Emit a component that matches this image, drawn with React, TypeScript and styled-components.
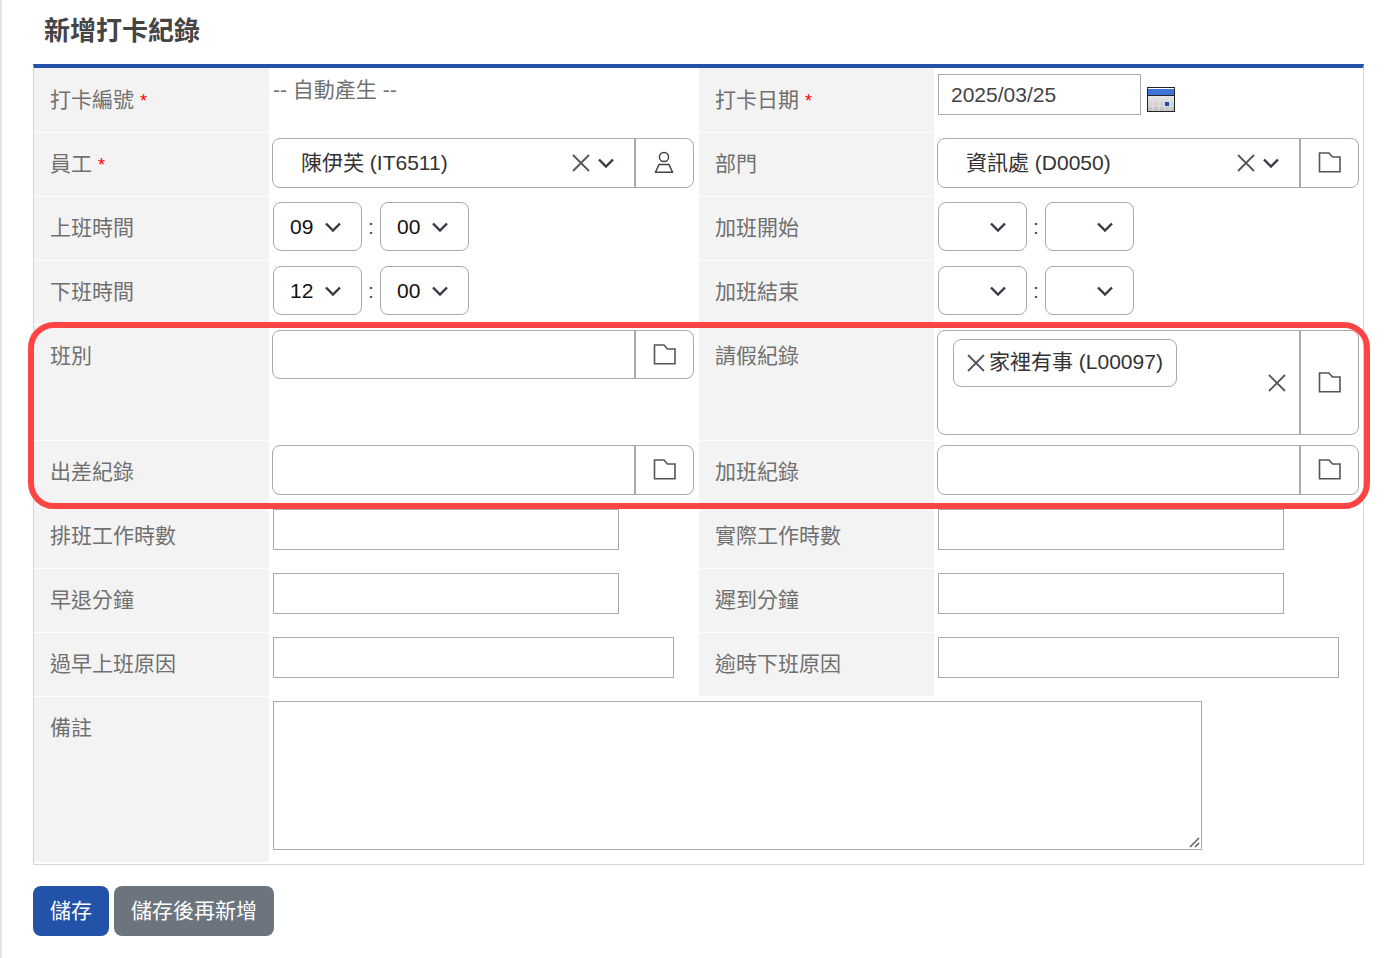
import React from 'react';
import styled, { createGlobalStyle } from 'styled-components';

const Global = createGlobalStyle`
  html, body { margin: 0; padding: 0; background: #fff; }
  body { font-family: "Liberation Sans", "Noto Sans CJK TC", sans-serif; font-size: 21px; }
  * { box-sizing: border-box; }
`;

const Page = styled.div`
  position: relative;
  width: 1400px;
  height: 958px;
  overflow: hidden;
  border-left: 2px solid #e4e4e4;
  padding-left: 31px;
`;
const Title = styled.h1`
  margin: 0;
  height: 64px;
  padding: 15px 0 0 11px;
  font-size: 26px;
  line-height: 32px;
  font-weight: 700;
  color: #444;
`;
const Table = styled.div`
  width: 1331px;
  border-top: 4px solid #2353a8;
  border-left: 1px solid #d4d4d4;
  border-right: 1px solid #d4d4d4;
  border-bottom: 1px solid #d4d4d4;
  padding-bottom: 1px;
`;
const Row = styled.div<{ $h: number }>`
  display: grid;
  grid-template-columns: 235px 430px 235px 429px;
  height: ${p => p.$h}px;
`;
const Label = styled.div<{ $top?: number }>`
  background: #f3f3f3;
  border-bottom: 1px solid #fff;
  padding: ${p => p.$top ?? 18}px 0 0 16px;
  line-height: 26px;
  color: #707070;
`;
const Star = styled.span`
  color: #f00;
  margin-left: 6px;
  font-size: 18px;
`;
const Value = styled.div<{ $span?: number; $top?: number }>`
  grid-column: span ${p => p.$span ?? 1};
  padding: ${p => p.$top ?? 5}px 0 0 4px;
  display: flex;
  align-items: flex-start;
`;
const Static = styled.div`
  margin-top: 3px;
  line-height: 26px;
  color: #707070;
`;
const TextInput = styled.input<{ $w: number }>`
  display: block;
  width: ${p => p.$w}px;
  height: 41px;
  border: 1px solid #aaa;
  padding: 0 12px;
  font: inherit;
  color: #444;
  background: #fff;
  outline: none;
`;
const CalendarIcon = styled.svg`
  margin: 13px 0 0 6px;
`;
const Combo = styled.div<{ $h?: number }>`
  margin-left: -1px;
  width: 422px;
  height: ${p => p.$h ?? 50}px;
  display: flex;
  border: 1px solid #aaa;
  border-radius: 8px;
  background: #fff;
`;
const ComboMain = styled.div`
  flex: 1;
  position: relative;
  display: flex;
  align-items: flex-start;
  min-width: 0;
`;
const ComboText = styled.div`
  padding: 11px 0 0 28px;
  line-height: 26px;
  color: #333;
  flex: 1;
`;
const ComboTools = styled.div`
  display: flex;
  align-items: center;
  height: 48px;
  padding-right: 20px;
  gap: 8px;
`;
const ComboClear = styled.div`
  display: flex;
  align-items: center;
  height: 100%;
  padding-right: 13px;
`;
const ComboButton = styled.div`
  width: 59px;
  flex: none;
  border-left: 2px solid #aaa;
  display: flex;
  align-items: center;
  justify-content: center;
  padding: 0 1px 1px 0;
`;
const Tag = styled.div`
  display: flex;
  align-items: center;
  gap: 4px;
  height: 48px;
  margin: 8px 0 0 15px;
  padding: 0 13px 6px 13px;
  border: 1px solid #aaa;
  border-radius: 8px;
  color: #333;
  white-space: nowrap;
`;
const TagCross = styled.span`
  display: flex;
  padding-top: 6px;
`;
const Spacer = styled.div`
  flex: 1;
`;
const TimeWrap = styled.div`
  display: flex;
  align-items: flex-start;
`;
const Time = styled.div`
  width: 89px;
  height: 49px;
  border: 1px solid #aaa;
  border-radius: 8px;
  padding: 0 20px 0 16px;
  display: flex;
  align-items: center;
  justify-content: space-between;
  color: #111;
  background: #fff;
`;
const TimeValue = styled.span`
  line-height: 24px;
`;
const Colon = styled.span`
  width: 18px;
  height: 49px;
  display: flex;
  align-items: center;
  justify-content: center;
  color: #444;
`;
const NoteWrap = styled.div`
  position: relative;
  width: 929px;
  height: 149px;
`;
const Note = styled.textarea`
  display: block;
  width: 100%;
  height: 100%;
  border: 1px solid #aaa;
  outline: none;
  resize: none;
  font: inherit;
  background: #fff;
`;
const Grip = styled.svg`
  position: absolute;
  right: 2px;
  bottom: 2px;
`;
const Actions = styled.div`
  display: flex;
  gap: 5px;
  margin-top: 21px;
`;
const Btn = styled.button<{ $bg: string; $w: number }>`
  width: ${p => p.$w}px;
  height: 50px;
  border: 0;
  border-radius: 8px;
  padding: 0 0 4px;
  background: ${p => p.$bg};
  color: #fff;
  font: inherit;
`;
const Highlight = styled.div`
  position: absolute;
  left: 26px;
  top: 322px;
  width: 1342px;
  height: 187px;
  border: 6px solid #ff4444;
  border-radius: 26px;
  pointer-events: none;
`;

const Cross = () => (
  <svg width="18" height="18" viewBox="0 0 18 18" fill="none" stroke="#555" strokeWidth="1.8">
    <path d="M1 1 17 17M17 1 1 17" />
  </svg>
);
const Chevron = () => (
  <svg width="16" height="10" viewBox="0 0 16 10" fill="none" stroke="#343a40" strokeWidth="2.4">
    <path d="M1 1.5 8 8.5 15 1.5" />
  </svg>
);
const Folder = () => (
  <svg width="23" height="21" viewBox="0 0 23 21" fill="none" stroke="#555" strokeWidth="1.6">
    <path d="M1.5 1h9.5l3.5 4h7.5v14.8H1.5z" />
  </svg>
);
const Person = () => (
  <svg width="20" height="26" viewBox="0 0 20 26" fill="none" stroke="#444" strokeWidth="1.5">
    <circle cx="10" cy="7" r="4.6" />
    <path d="M5 14.5h10l3.5 7.8H1.5z" />
  </svg>
);
const Calendar = () => (
  <CalendarIcon width="28" height="25" viewBox="0 0 28 25">
    <defs>
      <linearGradient id="cal" x1="0" y1="0" x2="0" y2="1">
        <stop offset="0" stopColor="#fff" />
        <stop offset="1" stopColor="#bdbdbd" />
      </linearGradient>
    </defs>
    <rect x="0.5" y="0.5" width="27" height="24" fill="url(#cal)" stroke="#222" />
    <rect x="1" y="2" width="26" height="6" fill="#3f73d8" />
    <path d="M1 8.5h26" stroke="#222" />
    <path d="M6 9v15M12 9v15M18 9v15M23 9v15M1 14h26M1 19h26" stroke="#e2e2e2" />
    <rect x="18" y="15" width="4" height="4" fill="#1f4fa8" />
  </CalendarIcon>
);

const TimePicker = ({ h, m }: { h?: string; m?: string }) => (
  <TimeWrap>
    <Time><TimeValue>{h}</TimeValue><Chevron /></Time>
    <Colon>:</Colon>
    <Time><TimeValue>{m}</TimeValue><Chevron /></Time>
  </TimeWrap>
);

const Picker = ({ text, icon, h }: { text?: string; icon: React.ReactNode; h?: number }) => (
  <Combo $h={h}>
    <ComboMain>
      <ComboText>{text}</ComboText>
      {text && <ComboTools><Cross /><Chevron /></ComboTools>}
    </ComboMain>
    <ComboButton>{icon}</ComboButton>
  </Combo>
);

export default function App() {
  return (
    <>
      <Global />
      <Page>
        <Title>新增打卡紀錄</Title>
        <Table>
          <Row $h={65}>
            <Label $top={19}>打卡編號<Star>*</Star></Label>
            <Value $top={6}><Static>-- 自動產生 --</Static></Value>
            <Label $top={19}>打卡日期<Star>*</Star></Label>
            <Value $top={6}><TextInput $w={203} defaultValue="2025/03/25" /><Calendar /></Value>
          </Row>
          <Row $h={64}>
            <Label>員工<Star>*</Star></Label>
            <Value><Picker text="陳伊芙 (IT6511)" icon={<Person />} /></Value>
            <Label>部門</Label>
            <Value><Picker text="資訊處 (D0050)" icon={<Folder />} /></Value>
          </Row>
          <Row $h={64}>
            <Label>上班時間</Label>
            <Value><TimePicker h="09" m="00" /></Value>
            <Label>加班開始</Label>
            <Value><TimePicker /></Value>
          </Row>
          <Row $h={64}>
            <Label>下班時間</Label>
            <Value><TimePicker h="12" m="00" /></Value>
            <Label>加班結束</Label>
            <Value><TimePicker /></Value>
          </Row>
          <Row $h={116}>
            <Label>班別</Label>
            <Value><Picker h={49} icon={<Folder />} /></Value>
            <Label>請假紀錄</Label>
            <Value>
              <Combo $h={105}>
                <ComboMain>
                  <Tag><TagCross><Cross /></TagCross>家裡有事 (L00097)</Tag>
                  <Spacer />
                  <ComboClear><Cross /></ComboClear>
                </ComboMain>
                <ComboButton><Folder /></ComboButton>
              </Combo>
            </Value>
          </Row>
          <Row $h={64}>
            <Label>出差紀錄</Label>
            <Value $top={4}><Picker icon={<Folder />} /></Value>
            <Label>加班紀錄</Label>
            <Value $top={4}><Picker icon={<Folder />} /></Value>
          </Row>
          <Row $h={64}>
            <Label>排班工作時數</Label>
            <Value $top={4}><TextInput $w={346} /></Value>
            <Label>實際工作時數</Label>
            <Value $top={4}><TextInput $w={346} /></Value>
          </Row>
          <Row $h={64}>
            <Label>早退分鐘</Label>
            <Value $top={4}><TextInput $w={346} /></Value>
            <Label>遲到分鐘</Label>
            <Value $top={4}><TextInput $w={346} /></Value>
          </Row>
          <Row $h={64}>
            <Label>過早上班原因</Label>
            <Value $top={4}><TextInput $w={401} /></Value>
            <Label>逾時下班原因</Label>
            <Value $top={4}><TextInput $w={401} /></Value>
          </Row>
          <Row $h={166}>
            <Label>備註</Label>
            <Value $span={3} $top={4}>
              <NoteWrap>
                <Note />
                <Grip width="11" height="11" viewBox="0 0 11 11" fill="none" stroke="#555" strokeWidth="1.4">
                  <path d="M1 10 10 1M6 10 10 6" />
                </Grip>
              </NoteWrap>
            </Value>
          </Row>
        </Table>
        <Actions>
          <Btn $bg="#2353a8" $w={76}>儲存</Btn>
          <Btn $bg="#6c757d" $w={160}>儲存後再新增</Btn>
        </Actions>
        <Highlight />
      </Page>
    </>
  );
}
